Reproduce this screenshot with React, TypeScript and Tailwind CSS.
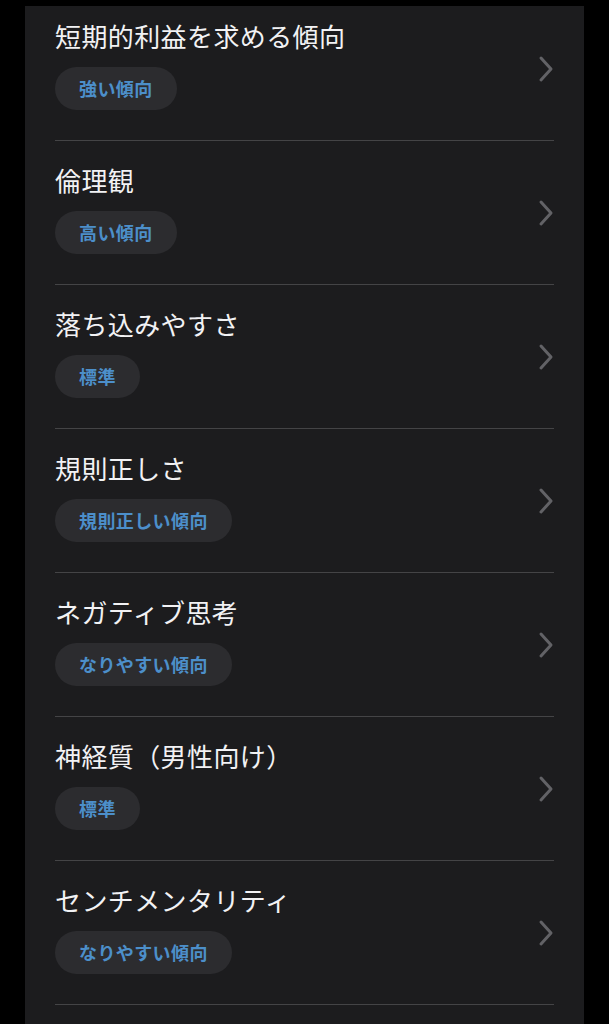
import React from 'react';

const items = [
  { title: '短期的利益を求める傾向', badge: '強い傾向' },
  { title: '倫理観', badge: '高い傾向' },
  { title: '落ち込みやすさ', badge: '標準' },
  { title: '規則正しさ', badge: '規則正しい傾向' },
  { title: 'ネガティブ思考', badge: 'なりやすい傾向' },
  { title: '神経質（男性向け）', badge: '標準' },
  { title: 'センチメンタリティ', badge: 'なりやすい傾向' },
];

function Chevron() {
  return (
    <svg width="16" height="28" viewBox="0 0 16 28" fill="none" className="mt-[6px] shrink-0">
      <path d="M3 3l10 11L3 25" stroke="#626266" strokeWidth={3} strokeLinecap="round" strokeLinejoin="round" />
    </svg>
  );
}

export default function App() {
  return (
    <div
      className="h-[1024px] overflow-hidden bg-black px-[25px] pt-[6px]"
      style={{ fontFamily: '"Noto Sans CJK JP", "Noto Sans", sans-serif' }}
    >
      <div className="h-full bg-[#1c1c1e] px-[30px]">
        {items.map((item, i) => (
          <div
            key={i}
            className={`flex items-center justify-between border-b-[1.5px] border-[#444446] pb-[30px] ${i === 0 ? 'pt-[15px]' : 'pt-[24px]'}`}
          >
            <div className="flex flex-col items-start gap-[16px]">
              <div className="text-[26px] leading-[30px] tracking-[0.4px] text-[#f2f2f4]">{item.title}</div>
              <div className="flex h-[43px] items-center rounded-full bg-[#2c2c2f] px-6 text-[18px] font-bold tracking-[0.4px] text-[#4c8fca]">
                {item.badge}
              </div>
            </div>
            <Chevron />
          </div>
        ))}
      </div>
    </div>
  );
}
